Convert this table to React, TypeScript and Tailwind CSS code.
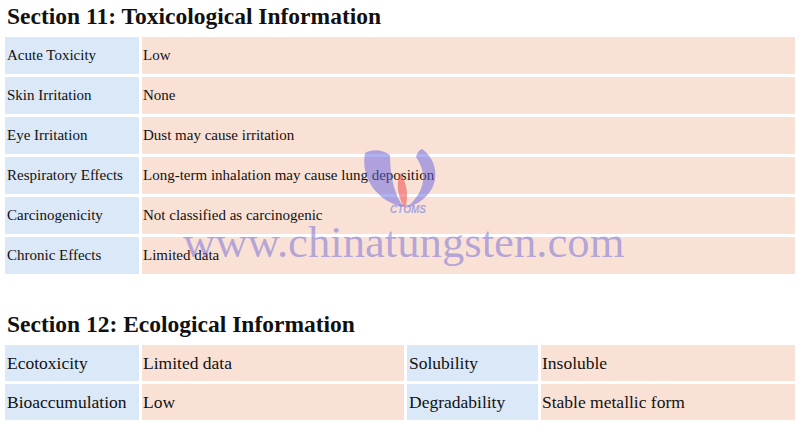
import React from "react";

const tox: [string, string][] = [
  ["Acute Toxicity", "Low"],
  ["Skin Irritation", "None"],
  ["Eye Irritation", "Dust may cause irritation"],
  ["Respiratory Effects", "Long-term inhalation may cause lung deposition"],
  ["Carcinogenicity", "Not classified as carcinogenic"],
  ["Chronic Effects", "Limited data"],
];

const eco: [string, string, string, string][] = [
  ["Ecotoxicity", "Limited data", "Solubility", "Insoluble"],
  ["Bioaccumulation", "Low", "Degradability", "Stable metallic form"],
];

export default function App() {
  return (
    <div className="relative w-[800px] h-[428px] overflow-hidden bg-white text-[#111] font-['Liberation_Serif','Times_New_Roman',serif]">
      <div className="h-[37px] pt-[5px] pl-[7px] text-[23.5px] font-bold leading-none">
        Section 11: Toxicological Information
      </div>
      <div className="grid grid-cols-[134px_1fr] gap-x-[3px] gap-y-[3px] pl-[5px] pr-[5px] text-[15px]">
        {tox.map(([k, v]) => (
          <React.Fragment key={k}>
            <div className="h-[37px] flex items-center pl-[2px] bg-[#dae8f7] whitespace-nowrap">{k}</div>
            <div className="h-[37px] flex items-center pl-[1px] bg-[#fae1d6]">{v}</div>
          </React.Fragment>
        ))}
      </div>
      <div className="h-[71px] pt-[39px] pl-[7px] text-[23.5px] font-bold leading-none">
        Section 12: Ecological Information
      </div>
      <div className="grid grid-cols-[134px_262px_131px_1fr] gap-x-[3px] gap-y-[3px] pl-[5px] pr-[5px] text-[17.5px]">
        {eco.map(([a, b, c, d]) => (
          <React.Fragment key={a}>
            <div className="h-[36px] flex items-center pl-[2px] bg-[#dae8f7] whitespace-nowrap">{a}</div>
            <div className="h-[36px] flex items-center pl-[1px] bg-[#fae1d6]">{b}</div>
            <div className="h-[36px] flex items-center pl-[2px] bg-[#dae8f7]">{c}</div>
            <div className="h-[36px] flex items-center pl-[1px] bg-[#fae1d6]">{d}</div>
          </React.Fragment>
        ))}
      </div>

      {/* watermark */}
      <div className="pointer-events-none absolute left-[360px] top-[145px] w-[90px] h-[75px]">
        <svg width="90" height="75" viewBox="0 0 90 75">
          <path d="M5,8 C0,35 20,58 44,62 C34,50 30,30 30,10 C22,4 12,4 5,8 Z" fill="rgba(100,100,225,0.5)" />
          <path d="M62,4 C82,18 82,52 46,63 C62,50 70,32 56,12 C57,8 59,5 62,4 Z" fill="rgba(100,100,225,0.5)" />
          <path d="M40,28 C47,37 49,52 45,63 C39,55 35,41 40,28 Z" fill="rgba(240,90,90,0.6)" />
        </svg>
        <div className="absolute left-[30px] top-[60px] text-[10px] font-bold italic leading-none text-[rgba(110,120,225,0.6)] font-['Liberation_Sans',Arial,sans-serif]">
          CTOMS
        </div>
      </div>
      <div className="pointer-events-none absolute left-[183px] top-[220px] text-[44.7px] leading-none whitespace-nowrap text-[rgba(90,90,215,0.45)]">
        www.chinatungsten.com
      </div>
    </div>
  );
}
